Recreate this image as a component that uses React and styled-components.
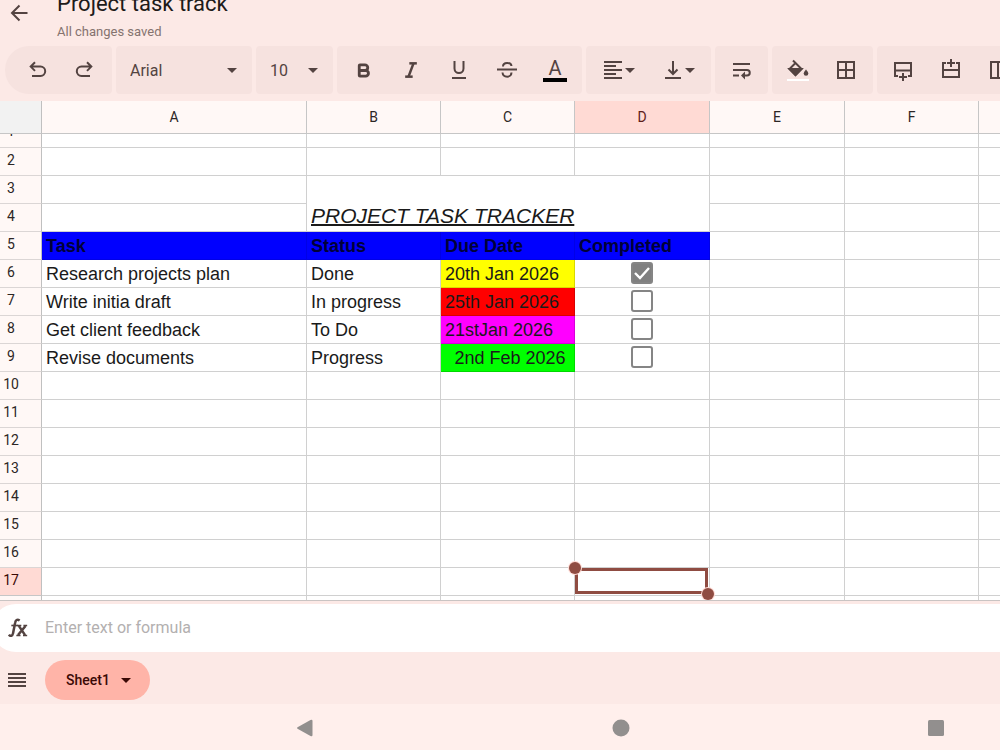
import React from 'react';
import styled, { createGlobalStyle } from 'styled-components';
import { Bold, Italic } from 'lucide-react';

const GlobalStyle = createGlobalStyle`
  * {
    box-sizing: border-box;
  }

  body {
    margin: 0;
    background: #fce9e6;
    color: #201a19;
    font-family: Roboto, 'Liberation Sans', sans-serif;
  }

  button {
    padding: 0;
    border: 0;
    background: none;
    color: inherit;
    font: inherit;
    cursor: pointer;
  }
`;

const Page = styled.div`
  height: 100vh;
  display: flex;
  flex-direction: column;
  overflow: hidden;
`;

const Header = styled.header`
  flex: none;
  height: 46px;
  display: flex;
  align-items: flex-end;
  gap: 22px;
  padding-left: 3px;
  overflow: hidden;
`;

const BackButton = styled.button`
  width: 32px;
  height: 32px;
  margin-bottom: 17px;
  display: grid;
  place-items: center;
  color: #534341;
`;

const DocInfo = styled.div`
  padding-bottom: 6px;
`;

const DocTitle = styled.h1`
  margin: 0 0 6px;
  font-size: 22px;
  line-height: 28px;
  font-weight: 400;
`;

const SaveState = styled.p`
  margin: 0;
  font-size: 13px;
  line-height: 16px;
  color: #85736f;
`;

const Toolbar = styled.div`
  flex: none;
  display: flex;
  gap: 4px;
  padding: 0 0 7px 5px;
  overflow: hidden;
`;

const Group = styled.div`
  flex: none;
  height: 48px;
  display: flex;
  align-items: center;
  padding: 0 3px 0 ${({ $first }) => ($first ? '8px' : '2px')};
  border-radius: ${({ $first }) => ($first ? '24px 4px 4px 24px' : '4px')};
  background: #f6e2df;
  color: #534341;
`;

const ToolButton = styled.button`
  width: ${({ $wide }) => ($wide ? '60px' : '48px')};
  height: 48px;
  display: flex;
  align-items: center;
  justify-content: center;
`;

const ColorButton = styled(ToolButton)`
  flex-direction: column;

  &::after {
    content: '';
    width: 24px;
    height: 4px;
    background: #000;
  }
`;

const ColorLetter = styled.span`
  color: #534341;
  font-size: 20px;
  line-height: 20px;
`;

const SelectWrap = styled.div`
  flex: none;
  width: ${({ $width }) => $width};
  height: 48px;
  display: grid;
  align-items: center;
  border-radius: 4px;
  background: #f6e2df;
  color: #534341;

  > * {
    grid-area: 1 / 1;
  }

  svg {
    justify-self: end;
    margin-right: 15px;
    pointer-events: none;
  }
`;

const Select = styled.select`
  width: 100%;
  height: 48px;
  padding: 0 14px;
  border: 0;
  appearance: none;
  background: none;
  color: inherit;
  font-family: inherit;
  font-size: 16px;
`;

const Sheet = styled.main`
  flex: 1;
  min-height: 0;
  overflow: hidden;
  background: #fff;
  border-bottom: 1px solid #c9c4c3;
`;

// wider than the window, the last column runs off the right edge
const Grid = styled.table`
  width: 120%;
  table-layout: fixed;
  border-collapse: separate;
  border-spacing: 0;
`;

const Col = styled.col`
  width: ${({ $width }) => $width};
`;

const ColHead = styled.th`
  height: 33px;
  padding: 0;
  border-right: 1px solid #c6c6c6;
  border-bottom: 1px solid #c6c6c6;
  background: ${({ $active }) => ($active ? '#ffdad4' : '#fff8f6')};
  color: ${({ $active }) => ($active ? '#5d211a' : '#2c2625')};
  font-size: 14px;
  line-height: 16px;
  font-weight: 400;
`;

const Corner = styled.td`
  padding: 0;
  border-right: 1px solid #c0c0c0;
  border-bottom: 1px solid #c6c6c6;
  background: #f2f2f2;
`;

const RowHead = styled.th`
  height: ${({ $clipped }) => ($clipped ? '14px' : '28px')};
  padding: 0 19px 4px 0;
  border-right: 1px solid #c0c0c0;
  border-bottom: 1px solid ${({ $active }) => ($active ? '#c6c6c6' : '#dbd6d5')};
  background: ${({ $active }) => ($active ? '#ffdad4' : '#fff8f6')};
  color: ${({ $active }) => ($active ? '#3a0905' : '#2c2625')};
  font-size: 14px;
  line-height: 16px;
  font-weight: 400;
`;

const ClippedLabel = styled.div`
  height: 9px;
  display: flex;
  align-items: flex-end;
  justify-content: center;
  padding-bottom: 4px;
  overflow: hidden;
`;

const Cell = styled.td`
  position: relative;
  height: 28px;
  padding: 0 4px;
  border-right: 1px solid ${({ $fill }) => ($fill ? 'rgba(0, 0, 0, 0.15)' : '#d0d0d0')};
  border-bottom: 1px solid ${({ $fill }) => ($fill ? 'rgba(0, 0, 0, 0.15)' : '#d0d0d0')};
  background: ${({ $fill }) => $fill || '#fff'};
  color: #1a1a1a;
  font-family: 'Liberation Sans', Arial, sans-serif;
  font-size: 18px;
  line-height: 20px;
  font-weight: ${({ $bold }) => ($bold ? 700 : 400)};
  text-align: ${({ $align }) => $align || 'left'};
  white-space: pre;
`;

const ClippedCell = styled(Cell)`
  height: 14px;
`;

const HeadCell = styled(Cell)`
  border-color: #0000e6;
  color: #000038;
`;

const TitleCell = styled(Cell)`
  vertical-align: bottom;
  padding-bottom: 2px;
  font-size: 21px;
  line-height: 26px;
  font-style: italic;
  text-decoration: underline;
  text-decoration-thickness: 2px;
`;

const CheckCell = styled(Cell)`
  padding: 0 0 2px;
  line-height: 22px;
`;

const Checkbox = styled.input`
  appearance: none;
  display: block;
  width: 22px;
  height: 22px;
  margin: 0 auto;
  border: 2px solid #858585;
  border-radius: 3px;
  background: #fff;

  &:checked {
    background: #808080 url("data:image/svg+xml,%3Csvg xmlns='http://www.w3.org/2000/svg' viewBox='0 0 18 18'%3E%3Cpath d='M2 9l5 5 9-10' fill='none' stroke='white' stroke-width='2.4'/%3E%3C/svg%3E")
      center / 18px 18px no-repeat;
  }
`;

const Selection = styled.div`
  position: absolute;
  z-index: 1;
  inset: 0 1px 1px 0;
  border: 3px solid #8f4c42;

  &::before,
  &::after {
    content: '';
    position: absolute;
    width: 12px;
    height: 12px;
    border-radius: 50%;
    background: #8f4c42;
    box-shadow: 0 0 0 1px #ffdad4;
  }

  &::before {
    top: -9px;
    left: -9px;
  }

  &::after {
    right: -9px;
    bottom: -9px;
  }
`;

const FormulaBar = styled.label`
  flex: none;
  height: 48px;
  display: flex;
  align-items: center;
  gap: 17px;
  margin: 3px 0 0 -8px;
  padding-left: 16px;
  border-radius: 24px 0 0 24px;
  background: #fff;
  color: #534341;
`;

const FormulaInput = styled.input`
  flex: 1;
  padding: 0;
  border: 0;
  outline: 0;
  background: none;
  font-family: inherit;
  font-size: 16px;
  line-height: 20px;

  &::placeholder {
    color: #b3b0b0;
  }
`;

const SheetTabs = styled.nav`
  flex: none;
  height: 52px;
  display: flex;
  align-items: center;
  gap: 18px;
  padding: 4px 0 0 7px;
  color: #534341;
`;

const MenuButton = styled.button`
  display: grid;
  width: 20px;
  height: 40px;
  place-items: center;
`;

const Tab = styled.button`
  height: 40px;
  display: flex;
  align-items: center;
  gap: 11px;
  border-radius: 20px;

  && {
    padding: 0 19px 0 21px;
    background: #ffb4a8;
    color: #3a0905;
    font-size: 14px;
    font-weight: 500;
  }
`;

const SystemBar = styled.nav`
  flex: none;
  height: 46px;
  display: flex;
  align-items: center;
  justify-content: space-between;
  padding: 2px 54px 0 295px;
  background: #ffefec;

  button {
    height: 20px;
  }
`;

const Icon = ({ size = 24, width = 2, children }) => (
  <svg
    width={size}
    height={size}
    viewBox="0 0 24 24"
    fill="none"
    stroke="currentColor"
    strokeWidth={width}
    aria-hidden="true"
  >
    {children}
  </svg>
);

const Caret = () => (
  <svg width="10" height="5" viewBox="0 0 10 5" fill="currentColor" aria-hidden="true">
    <path d="M0 0h10L5 5z" />
  </svg>
);

const columns = ['A', 'B', 'C', 'D', 'E', 'F', 'G'];
const widths = ['265px', '134px', '134px', '135px', '135px', '134px', 'auto'];

const tasks = [
  { task: 'Research projects plan', status: 'Done', due: '20th Jan 2026', fill: '#ffff00', done: true },
  { task: 'Write initia draft', status: 'In progress', due: '25th Jan 2026', fill: '#ff0000' },
  { task: 'Get client feedback', status: 'To Do', due: '21stJan 2026', fill: '#ff00ff' },
  { task: 'Revise documents', status: 'Progress', due: ' 2nd Feb 2026', fill: '#00ff00' },
];

const emptyRows = [10, 11, 12, 13, 14, 15, 16, 17];

const Blank = ({ from = 0, to = columns.length }) =>
  columns.slice(from, to).map((name) => <Cell key={name} />);

const EditorToolbar = () => (
  <Toolbar role="toolbar" aria-label="Formatting">
    <Group $first>
      <ToolButton aria-label="Undo">
        <Icon>
          <path d="M7 18h8.500a4.700 4.700 0 0 0 0-9.400H6M10 4.300L5.700 8.600 10 12.900" />
        </Icon>
      </ToolButton>
      <ToolButton aria-label="Redo">
        <Icon>
          <path d="M17 18H8.500a4.700 4.700 0 0 1 0-9.400H18M14 4.300l4.300 4.300L14 12.900" />
        </Icon>
      </ToolButton>
    </Group>
    <SelectWrap $width="136px">
      <Select aria-label="Font" defaultValue="Arial">
        <option>Arial</option>
      </Select>
      <Caret />
    </SelectWrap>
    <SelectWrap $width="77px">
      <Select aria-label="Font size" defaultValue="10">
        <option>10</option>
      </Select>
      <Caret />
    </SelectWrap>
    <Group>
      <ToolButton aria-label="Bold">
        <Bold size={17} strokeWidth={4} strokeLinecap="butt" strokeLinejoin="miter" />
      </ToolButton>
      <ToolButton aria-label="Italic">
        <Italic size={20} strokeWidth={3} strokeLinecap="butt" />
      </ToolButton>
      <ToolButton aria-label="Underline">
        <Icon>
          <path d="M7.500 3v7.500a4.500 4.500 0 0 0 9 0V3" />
          <path d="M5 20h14" />
        </Icon>
      </ToolButton>
      <ToolButton aria-label="Strikethrough">
        <Icon>
          <path d="M2 11.500h20" />
          <path d="M8 8.500c0-4.500 8-4.500 8.500-.5M7.500 14.500c.5 5.500 9 5.500 9 0" />
        </Icon>
      </ToolButton>
      <ColorButton aria-label="Text color">
        <ColorLetter>A</ColorLetter>
      </ColorButton>
    </Group>
    <Group>
      <ToolButton $wide aria-label="Horizontal align">
        <Icon>
          <path d="M3 4h18M3 8h12M3 12h18M3 16h12M3 20h18" />
        </Icon>
        <Caret />
      </ToolButton>
      <ToolButton $wide aria-label="Vertical align">
        <Icon>
          <path d="M4 20h16M12 3v13M7.500 11.500L12 16l4.500-4.500" />
        </Icon>
        <Caret />
      </ToolButton>
    </Group>
    <Group>
      <ToolButton aria-label="Text wrapping">
        <Icon>
          <path d="M4 6h17M4 12h14a2.700 2.700 0 0 1 0 5.500h-3M4 17.500h6" />
          <path d="M16 13.500v8l-4-4z" fill="currentColor" stroke="none" />
        </Icon>
      </ToolButton>
    </Group>
    <Group>
      <ToolButton aria-label="Fill color">
        <Icon>
          <path d="M7 2.500L15.500 11l-6 6-6-6L10 4.500" />
          <path d="M3.500 11h12l-6 6z" fill="currentColor" />
          <path d="M20 11.500s2.300 2.600 2.300 4a2.300 2.300 0 0 1-4.600 0c0-1.400 2.300-4 2.300-4z" fill="currentColor" stroke="none" />
          <path d="M1 22h22" stroke="#fff" />
        </Icon>
      </ToolButton>
      <ToolButton aria-label="Borders">
        <Icon>
          <path d="M4 4h16v16H4zM12 4v16M4 12h16" />
        </Icon>
      </ToolButton>
    </Group>
    <Group>
      <ToolButton aria-label="Insert row below">
        <Icon>
          <path d="M7 18H4V5h16v13h-3M4 12.500h16" />
          <path d="M12 15v8M8 19h8" />
        </Icon>
      </ToolButton>
      <ToolButton aria-label="Insert row above">
        <Icon>
          <path d="M7 5H4v14h16V5h-3M4 12h16" />
          <path d="M12 1v8M8 5h8" />
        </Icon>
      </ToolButton>
      <ToolButton aria-label="Insert column">
        <Icon>
          <path d="M18 7V4H4v16h14v-3M11 4v16" />
          <path d="M18 8v8M14 12h8" />
        </Icon>
      </ToolButton>
    </Group>
  </Toolbar>
);

const TaskSheet = () => (
  <Sheet>
    <Grid>
      <colgroup>
        <Col $width="42px" />
        {widths.map((width, i) => (
          <Col key={columns[i]} $width={width} />
        ))}
      </colgroup>
      <thead>
        <tr>
          <Corner />
          {columns.map((name) => (
            <ColHead key={name} scope="col" $active={name === 'D'}>
              {name}
            </ColHead>
          ))}
        </tr>
      </thead>
      <tbody>
        <tr>
          <RowHead scope="row" $clipped>
            <ClippedLabel>1</ClippedLabel>
          </RowHead>
          {columns.map((name) => (
            <ClippedCell key={name} />
          ))}
        </tr>
        <tr>
          <RowHead scope="row">2</RowHead>
          <Blank />
        </tr>
        <tr>
          <RowHead scope="row">3</RowHead>
          <Blank to={1} />
          <TitleCell colSpan={3} rowSpan={2}>PROJECT TASK TRACKER</TitleCell>
          <Blank from={4} />
        </tr>
        <tr>
          <RowHead scope="row">4</RowHead>
          <Blank to={1} />
          <Blank from={4} />
        </tr>
        <tr>
          <RowHead scope="row">5</RowHead>
          {['Task', 'Status', 'Due Date', 'Completed'].map((label) => (
            <HeadCell key={label} $fill="#0000ff" $bold>
              {label}
            </HeadCell>
          ))}
          <Blank from={4} />
        </tr>
        {tasks.map(({ task, status, due, fill, done }, i) => (
          <tr key={task}>
            <RowHead scope="row">{i + 6}</RowHead>
            <Cell>{task}</Cell>
            <Cell>{status}</Cell>
            <Cell $fill={fill} $align={due.startsWith(' ') ? 'center' : 'left'}>
              {due}
            </Cell>
            <CheckCell>
              <Checkbox type="checkbox" aria-label={`${task} completed`} defaultChecked={done} />
            </CheckCell>
            <Blank from={4} />
          </tr>
        ))}
        {emptyRows.map((row) => (
          <tr key={row}>
            <RowHead scope="row" $active={row === 17}>
              {row}
            </RowHead>
            {columns.map((name) => (
              <Cell key={name}>{row === 17 && name === 'D' && <Selection />}</Cell>
            ))}
          </tr>
        ))}
        <tr>
          <RowHead scope="row" aria-label="18" />
          <Blank />
        </tr>
      </tbody>
    </Grid>
  </Sheet>
);

const App = () => (
  <>
    <GlobalStyle />
    <Page>
      <Header>
        <BackButton aria-label="Back">
          <Icon>
            <path d="M20.500 12H5.500M12.500 4.500L5 12l7.500 7.500" />
          </Icon>
        </BackButton>
        <DocInfo>
          <DocTitle>Project task track</DocTitle>
          <SaveState>All changes saved</SaveState>
        </DocInfo>
      </Header>
      <EditorToolbar />
      <TaskSheet />
      <FormulaBar>
        <Icon size={20} width={3}>
          <path d="M1 20c2 2.500 4.500 1.500 5-1.500L8.500 6C9 2.500 11 1 14 3" />
          <path d="M4 9h8" strokeWidth="2" />
          <path d="M13 9.500l7.500 11M21 9.500l-9 11" />
          <path d="M11.500 9H16M18.500 9H23M10 21h5M18 21h5" strokeWidth="2" />
        </Icon>
        <FormulaInput type="text" aria-label="Formula" placeholder="Enter text or formula" />
      </FormulaBar>
      <SheetTabs aria-label="Sheets">
        <MenuButton aria-label="All sheets">
          <svg width="18" height="14" viewBox="0 0 18 14" fill="currentColor" aria-hidden="true">
            <path d="M0 0h18v2H0zM0 4h18v2H0zM0 8h18v2H0zM0 12h18v2H0z" />
          </svg>
        </MenuButton>
        <Tab>
          Sheet1
          <Caret />
        </Tab>
      </SheetTabs>
      <SystemBar aria-label="System">
        <button aria-label="Back">
          <svg width="20" height="20" viewBox="0 0 20 20" fill="#928f8e" aria-hidden="true">
            <path d="M2.500 9.300L15.500 2q2-.8 2 1v14q0 1.800-2 1L2.500 10.700q-1-.7 0-1.400z" />
          </svg>
        </button>
        <button aria-label="Home">
          <svg width="20" height="20" viewBox="0 0 20 20" fill="#928f8e" aria-hidden="true">
            <circle cx="10" cy="10" r="8.500" />
          </svg>
        </button>
        <button aria-label="Recent apps">
          <svg width="20" height="20" viewBox="0 0 20 20" fill="#928f8e" aria-hidden="true">
            <rect x="2" y="2" width="16" height="16" rx="1.500" />
          </svg>
        </button>
      </SystemBar>
    </Page>
  </>
);

export default App;
